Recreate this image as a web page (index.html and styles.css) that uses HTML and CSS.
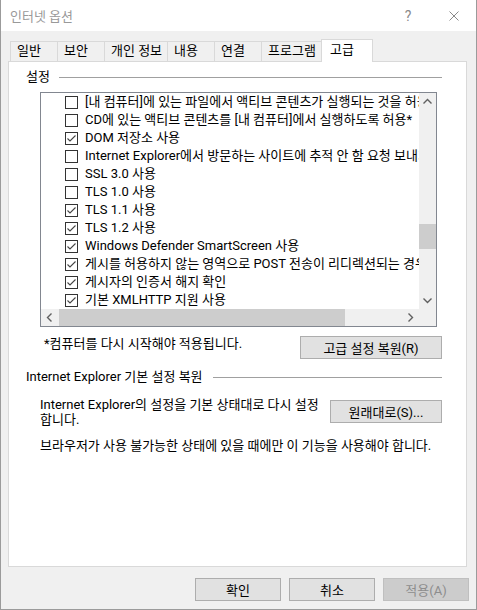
FILE: index.html
```html
<!DOCTYPE html>
<html lang="ko">
<head>
  <meta charset="UTF-8">
  <meta name="viewport" content="width=device-width, initial-scale=1.0">
  <title>인터넷 옵션</title>
  <link rel="stylesheet" href="styles.css">
</head>
<body>
  <div class="window">
    <div class="titlebar">
      <span class="title">인터넷 옵션</span>
      <span class="caption-btn help">?</span>
      <span class="caption-btn close">
        <svg width="10" height="10" viewBox="0 0 10 10"><path d="M0.5 0.5L9.5 9.5M9.5 0.5L0.5 9.5" stroke="#8a8a8a" stroke-width="1"/></svg>
      </span>
    </div>

    <div class="main">
      <div class="tabs">
        <div class="tab">일반</div>
        <div class="tab">보안</div>
        <div class="tab">개인 정보</div>
        <div class="tab">내용</div>
        <div class="tab">연결</div>
        <div class="tab">프로그램</div>
        <div class="tab active">고급</div>
      </div>

      <div class="panel">
        <div class="group-title"><span>설정</span><span class="rule"></span></div>

        <div class="listbox">
          <ul class="items">
            <li><span class="box"></span>[내 컴퓨터]에 있는 파일에서 액티브 콘텐츠가 실행되는 것을 허용*</li>
            <li><span class="box"></span>CD에 있는 액티브 콘텐츠를 [내 컴퓨터]에서 실행하도록 허용*</li>
            <li><span class="box checked"><svg viewBox="0 0 11 11"><path d="M1.5 5.5L4 8L9.5 2.5"/></svg></span>DOM 저장소 사용</li>
            <li><span class="box"></span>Internet Explorer에서 방문하는 사이트에 추적 안 함 요청 보내기*</li>
            <li><span class="box"></span>SSL 3.0 사용</li>
            <li><span class="box"></span>TLS 1.0 사용</li>
            <li><span class="box checked"><svg viewBox="0 0 11 11"><path d="M1.5 5.5L4 8L9.5 2.5"/></svg></span>TLS 1.1 사용</li>
            <li><span class="box checked"><svg viewBox="0 0 11 11"><path d="M1.5 5.5L4 8L9.5 2.5"/></svg></span>TLS 1.2 사용</li>
            <li><span class="box checked"><svg viewBox="0 0 11 11"><path d="M1.5 5.5L4 8L9.5 2.5"/></svg></span>Windows Defender SmartScreen 사용</li>
            <li><span class="box checked"><svg viewBox="0 0 11 11"><path d="M1.5 5.5L4 8L9.5 2.5"/></svg></span>게시를 허용하지 않는 영역으로 POST 전송이 리디렉션되는 경우 경고</li>
            <li><span class="box checked"><svg viewBox="0 0 11 11"><path d="M1.5 5.5L4 8L9.5 2.5"/></svg></span>게시자의 인증서 해지 확인</li>
            <li><span class="box checked"><svg viewBox="0 0 11 11"><path d="M1.5 5.5L4 8L9.5 2.5"/></svg></span>기본 XMLHTTP 지원 사용</li>
          </ul>

          <div class="vscroll">
            <svg class="arrow" viewBox="0 0 17 17"><path d="M4.5 10.5L8.5 6.5L12.5 10.5"/></svg>
            <div class="track"><div class="thumb"></div></div>
            <svg class="arrow" viewBox="0 0 17 17"><path d="M4.5 6.5L8.5 10.5L12.5 6.5"/></svg>
          </div>

          <div class="hscroll">
            <svg class="arrow" viewBox="0 0 17 17"><path d="M10.5 4.5L6.5 8.5L10.5 12.5"/></svg>
            <div class="track"><div class="thumb"></div></div>
            <svg class="arrow" viewBox="0 0 17 17"><path d="M6.5 4.5L10.5 8.5L6.5 12.5"/></svg>
          </div>

          <div class="corner"></div>
        </div>

        <div class="note-row">
          <span class="note">*컴퓨터를 다시 시작해야 적용됩니다.</span>
          <button class="btn btn-restore">고급 설정 복원(R)</button>
        </div>

        <div class="group-title group-ie"><span>Internet Explorer 기본 설정 복원</span><span class="rule"></span></div>

        <div class="reset-row">
          <p class="reset-text">Internet Explorer의 설정을 기본 상태대로 다시 설정<br>합니다.</p>
          <button class="btn btn-reset">원래대로(S)...</button>
        </div>

        <p class="warning">브라우저가 사용 불가능한 상태에 있을 때에만 이 기능을 사용해야 합니다.</p>
      </div>
    </div>

    <div class="footer">
      <button class="btn">확인</button>
      <button class="btn">취소</button>
      <button class="btn" disabled>적용(A)</button>
    </div>
  </div>
</body>
</html>
```

FILE: styles.css
```css
/* General Styles */
body {
  margin: 0;
  font-family: Roboto, "Noto Sans CJK KR", sans-serif;
  font-size: 13px;
  color: #000;
}

.window {
  width: 477px;
  height: 610px;
  box-sizing: border-box;
  border: 1px solid #9b9b9b;
  border-top: 0;
  background-color: #f0f0f0;
  display: flex;
  flex-direction: column;
}

/* Title bar */
.titlebar {
  height: 31px;
  flex-shrink: 0;
  background-color: #fff;
  display: flex;
  align-items: center;
}

.title {
  flex: 1;
  padding-left: 9px;
  color: #999;
}

.caption-btn {
  width: 46px;
  height: 31px;
  display: flex;
  align-items: center;
  justify-content: center;
  color: #8a8a8a;
}

.help {
  font-size: 14px;
}

.close {
  width: 45px;
}

/* Tabs */
.main {
  padding: 0 9px 0 7px;
}

.tabs {
  height: 30px;
  padding-left: 2px;
  display: flex;
  align-items: flex-end;
}

.tab {
  height: 20px;
  line-height: 18px;
  min-width: 48px;
  padding: 0 5px 0 6px;
  box-sizing: border-box;
  border: 1px solid #d9d9d9;
  border-bottom: 0;
  margin-left: -1px;
  background-color: #f0f0f0;
}

.tab:first-child {
  margin-left: 0;
}

.tab.active {
  position: relative;
  z-index: 1;
  height: 23px;
  line-height: 20px;
  min-width: 52px;
  padding-left: 8px;
  margin-bottom: -1px;
  background-color: #fff;
}

.panel {
  height: 506px;
  box-sizing: border-box;
  border: 1px solid #d9d9d9;
  background-color: #fff;
  padding: 0 24px 0 17px;
}

/* Group headers */
.group-title {
  display: flex;
  align-items: center;
  height: 16px;
  line-height: 16px;
  margin-top: 7px;
}

.rule {
  flex: 1;
  height: 1px;
  margin-left: 9px;
  background-color: #a0a0a0;
}

.group-ie {
  margin-top: 10px;
}

.group-ie .rule {
  margin-left: 10px;
}

/* Settings list */
.listbox {
  margin: 7px 0 0 14px;
  width: 397px;
  height: 235px;
  box-sizing: border-box;
  border: 1px solid #828790;
  display: grid;
  grid-template-columns: 1fr 17px;
  grid-template-rows: 1fr 17px;
}

.items {
  margin: 0;
  padding: 0 0 0 24px;
  list-style: none;
  overflow: hidden;
  white-space: nowrap;
}

.items li {
  height: 18px;
  line-height: 18px;
  display: flex;
  align-items: center;
}

.box {
  width: 13px;
  height: 13px;
  box-sizing: border-box;
  border: 1px solid #333;
  margin-right: 7px;
  flex-shrink: 0;
}

.box svg {
  display: block;
  width: 11px;
  height: 11px;
  fill: none;
  stroke: #444;
  stroke-width: 1.1;
}

.vscroll,
.hscroll,
.corner {
  background-color: #f0f0f0;
}

.vscroll {
  display: flex;
  flex-direction: column;
}

.hscroll {
  display: flex;
}

.arrow {
  display: block;
  width: 17px;
  height: 17px;
  flex-shrink: 0;
  fill: none;
  stroke: #606060;
  stroke-width: 1.4;
}

.track {
  flex: 1;
}

.thumb {
  background-color: #cdcdcd;
}

.vscroll .thumb {
  margin-top: 114px;
  height: 25px;
}

.hscroll .thumb {
  margin-left: 1px;
  width: 286px;
  height: 100%;
}

/* Rows under the list */
.note-row,
.reset-row {
  display: flex;
  justify-content: space-between;
  align-items: flex-start;
}

.note-row {
  margin-top: 9px;
  padding-left: 18px;
}

.note {
  line-height: 16px;
}

.reset-row {
  margin-top: 12px;
  padding-left: 14px;
}

.reset-text {
  margin: 0;
  line-height: 15px;
}

.warning {
  margin: 11px 0 0;
  padding-left: 14px;
  line-height: 16px;
}

/* Buttons */
.btn {
  height: 23px;
  box-sizing: border-box;
  padding: 0;
  border: 1px solid #adadad;
  background-color: #e1e1e1;
  font-family: inherit;
  font-size: 13px;
  color: #000;
}

.btn:disabled {
  background-color: #cccccc;
  border-color: #bfbfbf;
  color: #8d8d8d;
}

.btn-restore {
  width: 142px;
}

.btn-reset {
  width: 112px;
  margin-top: 3px;
}

.footer {
  display: flex;
  justify-content: flex-end;
  gap: 8px;
  padding: 11px 7px 0 0;
}

.footer .btn {
  width: 86px;
}
```
